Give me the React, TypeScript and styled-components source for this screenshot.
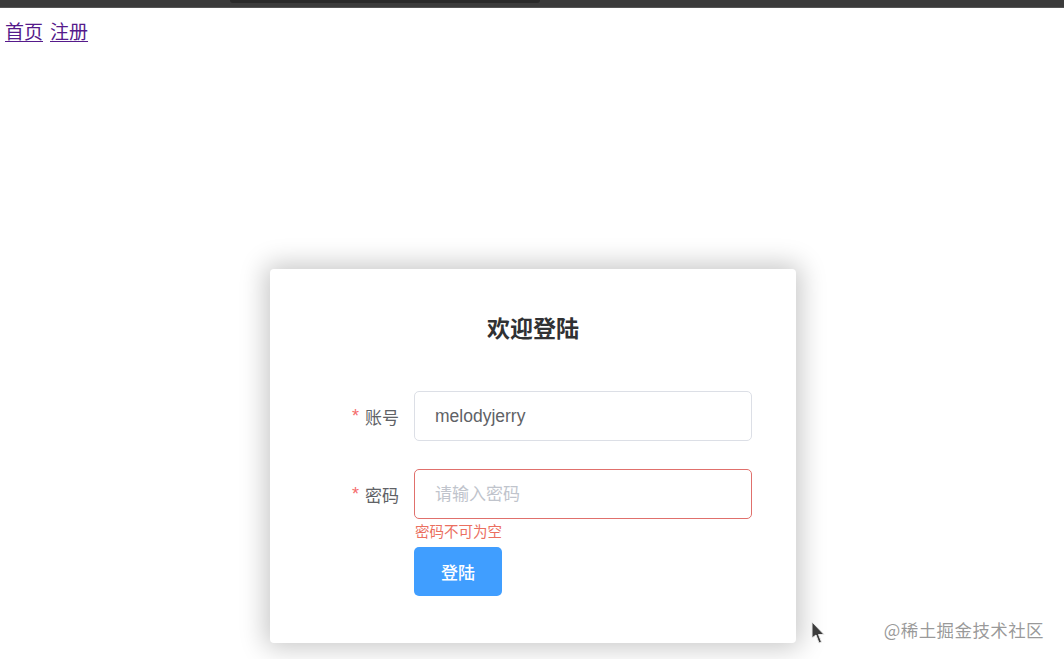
import React from "react";
import styled, { createGlobalStyle } from "styled-components";

const Global = createGlobalStyle`
  html, body { margin: 0; padding: 0; background: #fff; }
  body {
    font-family: "Liberation Sans", "Noto Sans CJK SC", sans-serif;
    width: 1064px; height: 659px; overflow: hidden;
  }
  * { box-sizing: border-box; }
`;

const Page = styled.div`
  position: relative;
  width: 1064px;
  height: 659px;
  display: flex;
  flex-direction: column;
`;

const ChromeBar = styled.div`
  height: 8px;
  background: #3b3b3b;
  border-bottom: 1px solid #555;
  padding-left: 230px;
  flex-shrink: 0;
`;

const ChromeTab = styled.div`
  width: 310px;
  height: 3px;
  background: #2a2a2a;
  border-radius: 0 0 4px 4px;
`;

const Nav = styled.nav`
  display: flex;
  gap: 7px;
  padding: 11px 0 0 5px;
  height: 50px;
`;

const NavLink = styled.a`
  font-family: "Noto Sans CJK SC", sans-serif;
  font-size: 19px;
  line-height: 24px;
  color: #551a8b;
  text-decoration: underline;
  text-underline-offset: 2px;
`;

const Center = styled.div`
  display: flex;
  justify-content: center;
  padding-top: 211px;
  padding-left: 2px;
`;

const Card = styled.div`
  width: 526px;
  height: 374px;
  background: #fff;
  border-radius: 4px;
  box-shadow: 0 0 26px 5px rgba(0, 0, 0, 0.22);
  padding: 45px 44px 0 44px;
  display: flex;
  flex-direction: column;
`;

const Title = styled.h2`
  margin: 0 0 51px 0;
  text-align: center;
  font-family: "Noto Sans CJK SC", sans-serif;
  font-size: 23px;
  line-height: 26px;
  font-weight: 700;
  color: #303133;
`;

const FormRow = styled.div<{ $mb: number }>`
  display: flex;
  align-items: flex-start;
  margin-bottom: ${(p) => p.$mb}px;
`;

const Label = styled.label`
  width: 100px;
  height: 50px;
  padding-right: 15px;
  display: flex;
  align-items: center;
  justify-content: flex-end;
  font-family: "Noto Sans CJK SC", sans-serif;
  font-size: 17px;
  color: #606266;
`;

const Star = styled.span`
  color: #f56c6c;
  margin-right: 6px;
  font-family: "Liberation Sans", sans-serif;
  font-size: 18px;
`;

const Field = styled.div`
  flex: 1;
  display: flex;
  flex-direction: column;
`;

const Input = styled.input<{ $error?: boolean }>`
  width: 338px;
  height: 50px;
  border: 1px solid ${(p) => (p.$error ? "#e0706c" : "#dcdfe6")};
  border-radius: 5px;
  padding: 0 20px;
  font-family: "Liberation Sans", "Noto Sans CJK SC", sans-serif;
  font-size: 17.5px;
  color: #606266;
  outline: none;
  &::placeholder {
    color: #c0c4cc;
    font-family: "Noto Sans CJK SC", sans-serif;
    font-size: 17px;
  }
`;

const ErrorText = styled.div`
  font-family: "Noto Sans CJK SC", sans-serif;
  font-size: 14.5px;
  line-height: 22px;
  color: #eb6f5f;
  padding-left: 1px;
  margin-top: 1px;
`;

const ButtonRow = styled.div`
  padding-left: 100px;
  margin-top: -1px;
`;

const Button = styled.button`
  width: 88px;
  height: 49px;
  border: none;
  border-radius: 5px;
  background: #409eff;
  color: #fff;
  font-family: "Noto Sans CJK SC", sans-serif;
  font-size: 17px;
  font-weight: 500;
  cursor: pointer;
`;

const Watermark = styled.div`
  position: absolute;
  right: 20px;
  bottom: 17px;
  font-family: "Noto Sans CJK SC", sans-serif;
  font-size: 17.5px;
  color: rgba(120, 120, 120, 0.75);
  letter-spacing: 0.4px;
`;

const Cursor = styled.svg`
  position: absolute;
  left: 811px;
  top: 621px;
`;

export default function App() {
  return (
    <>
      <Global />
      <Page>
        <ChromeBar>
          <ChromeTab />
        </ChromeBar>
        <Nav>
          <NavLink href="#">首页</NavLink>
          <NavLink href="#">注册</NavLink>
        </Nav>
        <Center>
          <Card>
            <Title>欢迎登陆</Title>
            <FormRow $mb={28}>
              <Label>
                <Star>*</Star>账号
              </Label>
              <Field>
                <Input defaultValue="melodyjerry" />
              </Field>
            </FormRow>
            <FormRow $mb={6}>
              <Label>
                <Star>*</Star>密码
              </Label>
              <Field>
                <Input $error placeholder="请输入密码" type="password" />
                <ErrorText>密码不可为空</ErrorText>
              </Field>
            </FormRow>
            <ButtonRow>
              <Button>登陆</Button>
            </ButtonRow>
          </Card>
        </Center>
        <Watermark>@稀土掘金技术社区</Watermark>
        <Cursor width="18" height="26" viewBox="0 0 18 26">
          <path d="M1 1 L1 17 L5 14 L8 22 L10.5 21 L7.5 13.5 L13 13.5 Z" fill="#3c3c3c" stroke="#e8e8e8" strokeWidth="1" />
        </Cursor>
      </Page>
    </>
  );
}
